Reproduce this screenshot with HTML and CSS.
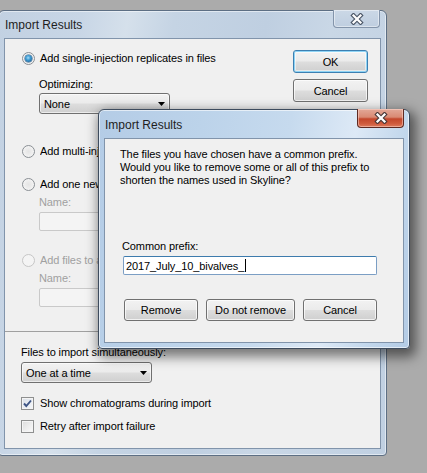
FILE: index.html
```html
<!DOCTYPE html>
<html>
<head>
<meta charset="utf-8">
<title>Import Results</title>
<link rel="stylesheet" href="styles.css">
</head>
<body>
<div class="win outer">
  <div class="titlebar">
    <span class="title">Import Results</span>
    <div class="closebtn inactive">
      <svg width="14" height="12" viewBox="0 0 14 12"><path d="M3.5 2.5 L10.5 9.5 M10.5 2.5 L3.5 9.5" stroke="#4a5566" stroke-width="4.4" stroke-linecap="square" fill="none"/><path d="M3.5 2.5 L10.5 9.5 M10.5 2.5 L3.5 9.5" stroke="#ffffff" stroke-width="2.2" stroke-linecap="square" fill="none"/></svg>
    </div>
  </div>
  <div class="client">
    <div class="top">
      <div class="options">
        <div class="row"><span class="radio checked"></span><span class="rtext">Add single-injection replicates in files</span></div>
        <div class="sub">
          <div class="lbl m13">Optimizing:</div>
          <div class="combo m2"><span>None</span><svg class="arrow" width="7" height="4" viewBox="0 0 7 4"><polygon points="0,0 7,0 3.5,4" fill="#000"/></svg></div>
        </div>
        <div class="row m31"><span class="radio"></span><span class="rtext clip">Add multi-injection replicates in directories</span></div>
        <div class="row m20"><span class="radio"></span><span class="rtext clip">Add one new replicate</span></div>
        <div class="sub">
          <div class="lbl dis m5">Name:</div>
          <div class="tbox dis m3"></div>
        </div>
        <div class="row m23"><span class="radio disabled"></span><span class="rtext dis clip">Add files to an existing replicate</span></div>
        <div class="sub">
          <div class="lbl dis m5">Name:</div>
          <div class="tbox dis m3"></div>
        </div>
      </div>
      <div class="btncol">
        <div class="btn default">OK</div>
        <div class="btn">Cancel</div>
      </div>
    </div>
    <div class="bottom">
      <div class="lbl m14">Files to import simultaneously:</div>
      <div class="combo m3"><span>One at a time</span><svg class="arrow" width="7" height="4" viewBox="0 0 7 4"><polygon points="0,0 7,0 3.5,4" fill="#000"/></svg></div>
      <div class="row crow m14"><span class="check on"><svg width="11" height="11" viewBox="0 0 11 11"><path d="M2 5.5 L4.3 8 L9 2.5" stroke="#3e5585" stroke-width="1.9" fill="none"/></svg></span><span class="ctext">Show chromatograms during import</span></div>
      <div class="row crow m10"><span class="check"></span><span class="ctext">Retry after import failure</span></div>
    </div>
  </div>
</div>

<div class="win dialog">
  <div class="titlebar dtitle">
    <span class="title">Import Results</span>
    <div class="closebtn active">
      <svg width="14" height="12" viewBox="0 0 14 12"><path d="M3.5 2.5 L10.5 9.5 M10.5 2.5 L3.5 9.5" stroke="#4a3a3a" stroke-width="4.4" stroke-linecap="square" fill="none"/><path d="M3.5 2.5 L10.5 9.5 M10.5 2.5 L3.5 9.5" stroke="#ffffff" stroke-width="2.2" stroke-linecap="square" fill="none"/></svg>
    </div>
  </div>
  <div class="client dclient">
    <div class="msg">The files you have chosen have a common prefix.<br>Would you like to remove some or all of this prefix to<br>shorten the names used in Skyline?</div>
    <div class="lbl plabel">Common prefix:</div>
    <div class="ptbox"><span>2017_July_10_bivalves_</span><span class="caret"></span></div>
    <div class="drow">
      <div class="btn dbtn">Remove</div>
      <div class="btn dbtn wide">Do not remove</div>
      <div class="btn dbtn">Cancel</div>
    </div>
  </div>
</div>
</body>
</html>
```

FILE: styles.css
```css
* { box-sizing: border-box; }
html, body { margin: 0; padding: 0; }
body {
  width: 427px;
  height: 473px;
  overflow: hidden;
  position: relative;
  background: #ababab;
  font-family: "Liberation Sans", Arial, sans-serif;
  font-size: 11px;
  letter-spacing: -0.1px;
  color: #000;
}

/* window frames */
.win {
  position: absolute;
  display: flex;
  flex-direction: column;
  border: 1px solid #5d6f84;
  border-radius: 6px 6px 4px 4px;
  padding: 0 5px 6px 5px;
  box-shadow: inset 0 0 0 1px rgba(255,255,255,0.5);
}
.outer {
  left: -2px;
  top: 10px;
  width: 389px;
  height: 446px;
  background: linear-gradient(100deg, #c2d1e2 0%, #c8d6e6 18%, #d5e0eb 28%, #c5d4e4 38%, #bfcfe1 58%, #c9d7e6 72%, #c0d0e2 100%);
}
.dialog {
  left: 98px;
  top: 109px;
  width: 312px;
  height: 240px;
  padding-bottom: 5px;
  border-color: #3e4c5e;
  background: linear-gradient(100deg, #b4cce6 0%, #bcd3ea 30%, #c6daee 55%, #dde9f6 74%, #c2d7ec 88%, #b3cbe5 100%);
  box-shadow: inset 0 0 0 1px rgba(255,255,255,0.6), 3px 5px 12px 3px rgba(0,0,0,0.5);
}

.titlebar {
  position: relative;
  flex: none;
  height: 27px;
  display: flex;
  align-items: center;
  padding-left: 1px;
  padding-top: 1px;
}
.dtitle { height: 28px; }
.title {
  font-family: "Liberation Sans", Arial, sans-serif;
  font-size: 12px;
  letter-spacing: 0;
  color: #1e1e1e;
}

.closebtn {
  position: absolute;
  top: -1px;
  right: 1px;
  width: 47px;
  height: 18px;
  border-radius: 0 0 4px 4px;
  display: flex;
  align-items: center;
  justify-content: center;
}
.closebtn.inactive {
  border: 1px solid #8394aa;
  border-top: none;
  background: linear-gradient(#cbd8e6, #bfcee0);
  box-shadow: inset 0 0 0 1px rgba(255,255,255,0.45);
}
.closebtn.active {
  height: 19px;
  right: 0px;
  border: 1px solid #5e2a22;
  border-top: none;
  background: linear-gradient(#e2a898 0%, #d98a74 45%, #c3472c 55%, #cf5a3c 80%, #dd7a5c 100%);
  box-shadow: inset 0 0 0 1px rgba(255,220,210,0.5);
}

.client {
  flex: 1;
  background: #f0f0f0;
  border: 1px solid #8194ab;
  display: flex;
  flex-direction: column;
}

/* outer dialog content */
.top {
  height: 293px;
  flex: none;
  display: flex;
  justify-content: space-between;
  border-bottom: 1px solid #a0a0a0;
}
.options {
  padding-left: 17px;
  padding-top: 13px;
  display: flex;
  flex-direction: column;
}
.sub {
  padding-left: 17px;
  display: flex;
  flex-direction: column;
}
.row {
  display: flex;
  align-items: center;
  height: 13px;
  white-space: nowrap;
}
.rtext { margin-left: 5px; line-height: 13px; }
.rtext.clip { max-width: 58px; overflow: hidden; }
.ctext { margin-left: 6px; line-height: 13px; }
.lbl { line-height: 13px; height: 13px; white-space: nowrap; }
.dis { color: #a0a0a0; }

.m2 { margin-top: 2px; }
.m3 { margin-top: 3px; }
.m5 { margin-top: 5px; }
.m10 { margin-top: 10px; }
.m13 { margin-top: 13px; }
.m14 { margin-top: 14px; }
.m20 { margin-top: 20px; }
.m23 { margin-top: 23px; }
.m31 { margin-top: 31px; }

.radio {
  flex: none;
  position: relative;
  width: 13px;
  height: 13px;
  border-radius: 50%;
  border: 1px solid #8a8f94;
  background: radial-gradient(circle at 50% 50%, #e4e4e4 0%, #eeeeee 50%, #fbfbfb 100%);
}
.radio.checked::after {
  content: "";
  position: absolute;
  left: 2px;
  top: 2px;
  width: 7px;
  height: 7px;
  border-radius: 50%;
  background: radial-gradient(circle at 45% 40%, #a6dcf7 0%, #3c9bd3 40%, #1b5d92 85%);
  box-shadow: 0 0 0 0.5px #2a5b86;
}
.radio.disabled {
  border-color: #c6c6c6;
  background: #f4f4f4;
}

.check {
  flex: none;
  width: 13px;
  height: 13px;
  border: 1px solid #8e8f8f;
  background: linear-gradient(135deg, #dcdcdc, #fbfbfb);
  box-shadow: inset 0 0 0 1px #f4f4f4;
  display: flex;
  align-items: center;
  justify-content: center;
}
.check.on { background: linear-gradient(135deg, #d9dfe8, #f6f8fb); }

.combo {
  width: 131px;
  height: 21px;
  flex: none;
  border: 1px solid #707070;
  border-radius: 3px;
  background: linear-gradient(#f2f2f2 0%, #ebebeb 48%, #dddddd 52%, #cfcfcf 100%);
  box-shadow: inset 0 0 0 1px rgba(255,255,255,0.6);
  display: flex;
  align-items: center;
  justify-content: space-between;
  padding: 0 4px 0 4px;
}
.arrow { display: block; }

.tbox {
  width: 230px;
  height: 19px;
  flex: none;
  border: 1px solid #c9c9c9;
  border-radius: 2px;
  background: #f4f4f4;
}

.btncol {
  padding-top: 11px;
  padding-right: 12px;
  display: flex;
  flex-direction: column;
  gap: 6px;
}
.btn {
  width: 75px;
  height: 23px;
  border: 1px solid #707070;
  border-radius: 3px;
  background: linear-gradient(#f2f2f2 0%, #ebebeb 48%, #dddddd 52%, #cfcfcf 100%);
  box-shadow: inset 0 0 0 1px rgba(255,255,255,0.7);
  display: flex;
  align-items: center;
  justify-content: center;
  white-space: nowrap;
}
.btn.default {
  border-color: #3c7fb1;
  box-shadow: inset 0 0 0 1px #8fd4f5, inset 0 0 0 2px rgba(255,255,255,0.5);
}

.bottom {
  padding-left: 16px;
  display: flex;
  flex-direction: column;
}

/* prefix dialog content */
.dclient { padding-top: 9px; }
.msg {
  margin-left: 15px;
  line-height: 13px;
  white-space: nowrap;
}
.plabel { margin-left: 17px; margin-top: 53px; }
.ptbox {
  margin-top: 3px;
  margin-left: 18px;
  width: 254px;
  height: 19px;
  border: 1px solid #7b9ec4;
  border-top-color: #3d7bad;
  border-radius: 2px;
  background: #fff;
  display: flex;
  align-items: center;
  padding-left: 2px;
}
.caret {
  display: inline-block;
  width: 1px;
  height: 13px;
  background: #000;
  margin-left: 1px;
}
.drow {
  margin-top: 24px;
  margin-left: 19px;
  display: flex;
  gap: 8px;
}
.dbtn { width: 74px; height: 22px; }
.dbtn.wide { width: 89px; }
```
